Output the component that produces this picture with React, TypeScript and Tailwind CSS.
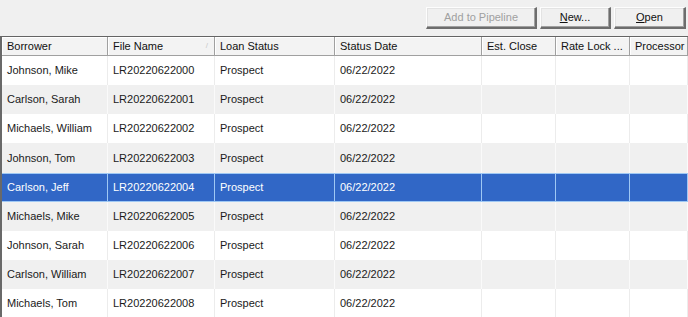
import React from "react";

interface Loan {
  borrower: string;
  file: string;
  status: string;
  date: string;
}

const loans: Loan[] = [
  { borrower: "Johnson, Mike", file: "LR20220622000", status: "Prospect", date: "06/22/2022" },
  { borrower: "Carlson, Sarah", file: "LR20220622001", status: "Prospect", date: "06/22/2022" },
  { borrower: "Michaels, William", file: "LR20220622002", status: "Prospect", date: "06/22/2022" },
  { borrower: "Johnson, Tom", file: "LR20220622003", status: "Prospect", date: "06/22/2022" },
  { borrower: "Carlson, Jeff", file: "LR20220622004", status: "Prospect", date: "06/22/2022" },
  { borrower: "Michaels, Mike", file: "LR20220622005", status: "Prospect", date: "06/22/2022" },
  { borrower: "Johnson, Sarah", file: "LR20220622006", status: "Prospect", date: "06/22/2022" },
  { borrower: "Carlson, William", file: "LR20220622007", status: "Prospect", date: "06/22/2022" },
  { borrower: "Michaels, Tom", file: "LR20220622008", status: "Prospect", date: "06/22/2022" },
];

const SELECTED = 4;

// column widths incl. the 1px right border
const cols = ["w-[106px]", "w-[107px]", "w-[120px]", "w-[147px]", "w-[74px]", "w-[74px]", "flex-1"];

const WinButton = ({ children, disabled, width }: { children: React.ReactNode; disabled?: boolean; width: string }) => (
  <div
    className={`${width} h-[22px] flex items-center justify-center bg-[#f0f0f0] border-t border-l border-t-[#fdfdfd] border-l-[#fdfdfd] border-r-2 border-b-2 border-r-[#6d6d6d] border-b-[#6d6d6d] shadow-[inset_-1px_-1px_0_#a0a0a0,inset_1px_1px_0_#e3e3e3] text-[11px] ${
      disabled ? "text-[#a0a0a0]" : "text-[#111]"
    }`}
  >
    {children}
  </div>
);

export default function App() {
  const headers = ["Borrower", "File Name", "Loan Status", "Status Date", "Est. Close", "Rate Lock ...", "Processor"];

  return (
    <div
      className="w-[688px] h-[317px] overflow-hidden bg-[#f0f0f0] flex flex-col"
      style={{ fontFamily: '"Liberation Sans", Arial, sans-serif' }}
    >
      <div className="h-[36px] shrink-0 flex items-start justify-end gap-[3px] pt-[7px] pr-[2px]">
        <WinButton width="w-[111px]" disabled>
          Add to Pipeline
        </WinButton>
        <WinButton width="w-[71px]">
          <span><span className="underline">N</span>ew...</span>
        </WinButton>
        <WinButton width="w-[72px]">
          <span><span className="underline">O</span>pen</span>
        </WinButton>
      </div>

      <div className="flex-1 flex flex-col border-t border-t-[#646464] border-l-2 border-l-[#696969] bg-white">
        <div className="h-[19px] shrink-0 flex bg-[#f3f3f3] border-b border-b-[#a0a0a0] text-[11px] text-[#111]">
          {headers.map((h, i) => (
            <div
              key={h}
              className={`${cols[i]} relative flex items-center pl-[5px] border-r border-r-[#a0a0a0] shadow-[inset_1px_1px_0_#ffffff] whitespace-nowrap`}
            >
              {h}
              {i === 1 && (
                <span className="absolute right-[6px] top-[5px] text-[8px] leading-none text-[#c8c8c8]">/</span>
              )}
            </div>
          ))}
        </div>

        {loans.map((l, r) => {
          const sel = r === SELECTED;
          const bg = sel ? "bg-[#3167c6] text-white" : r % 2 === 0 ? "bg-white text-[#1a1a1a]" : "bg-[#f0f0f0] text-[#1a1a1a]";
          const sep = sel ? "border-r-[#9fc8f4]" : r % 2 === 0 ? "border-r-[#ececec]" : "border-r-[#fafafa]";
          const cells = [l.borrower, l.file, l.status, l.date, "", "", ""];
          return (
            <div
              key={l.file}
              className={`${r === 3 ? "h-[30px]" : "h-[29px]"} shrink-0 flex text-[11px] ${bg} ${sel ? "border-y border-y-[#9fc8f4]" : ""}`}
            >
              {cells.map((c, i) => (
                <div key={i} className={`${cols[i]} flex items-center pl-[5px] border-r ${sep} whitespace-nowrap`}>
                  {c}
                </div>
              ))}
            </div>
          );
        })}
      </div>
    </div>
  );
}
